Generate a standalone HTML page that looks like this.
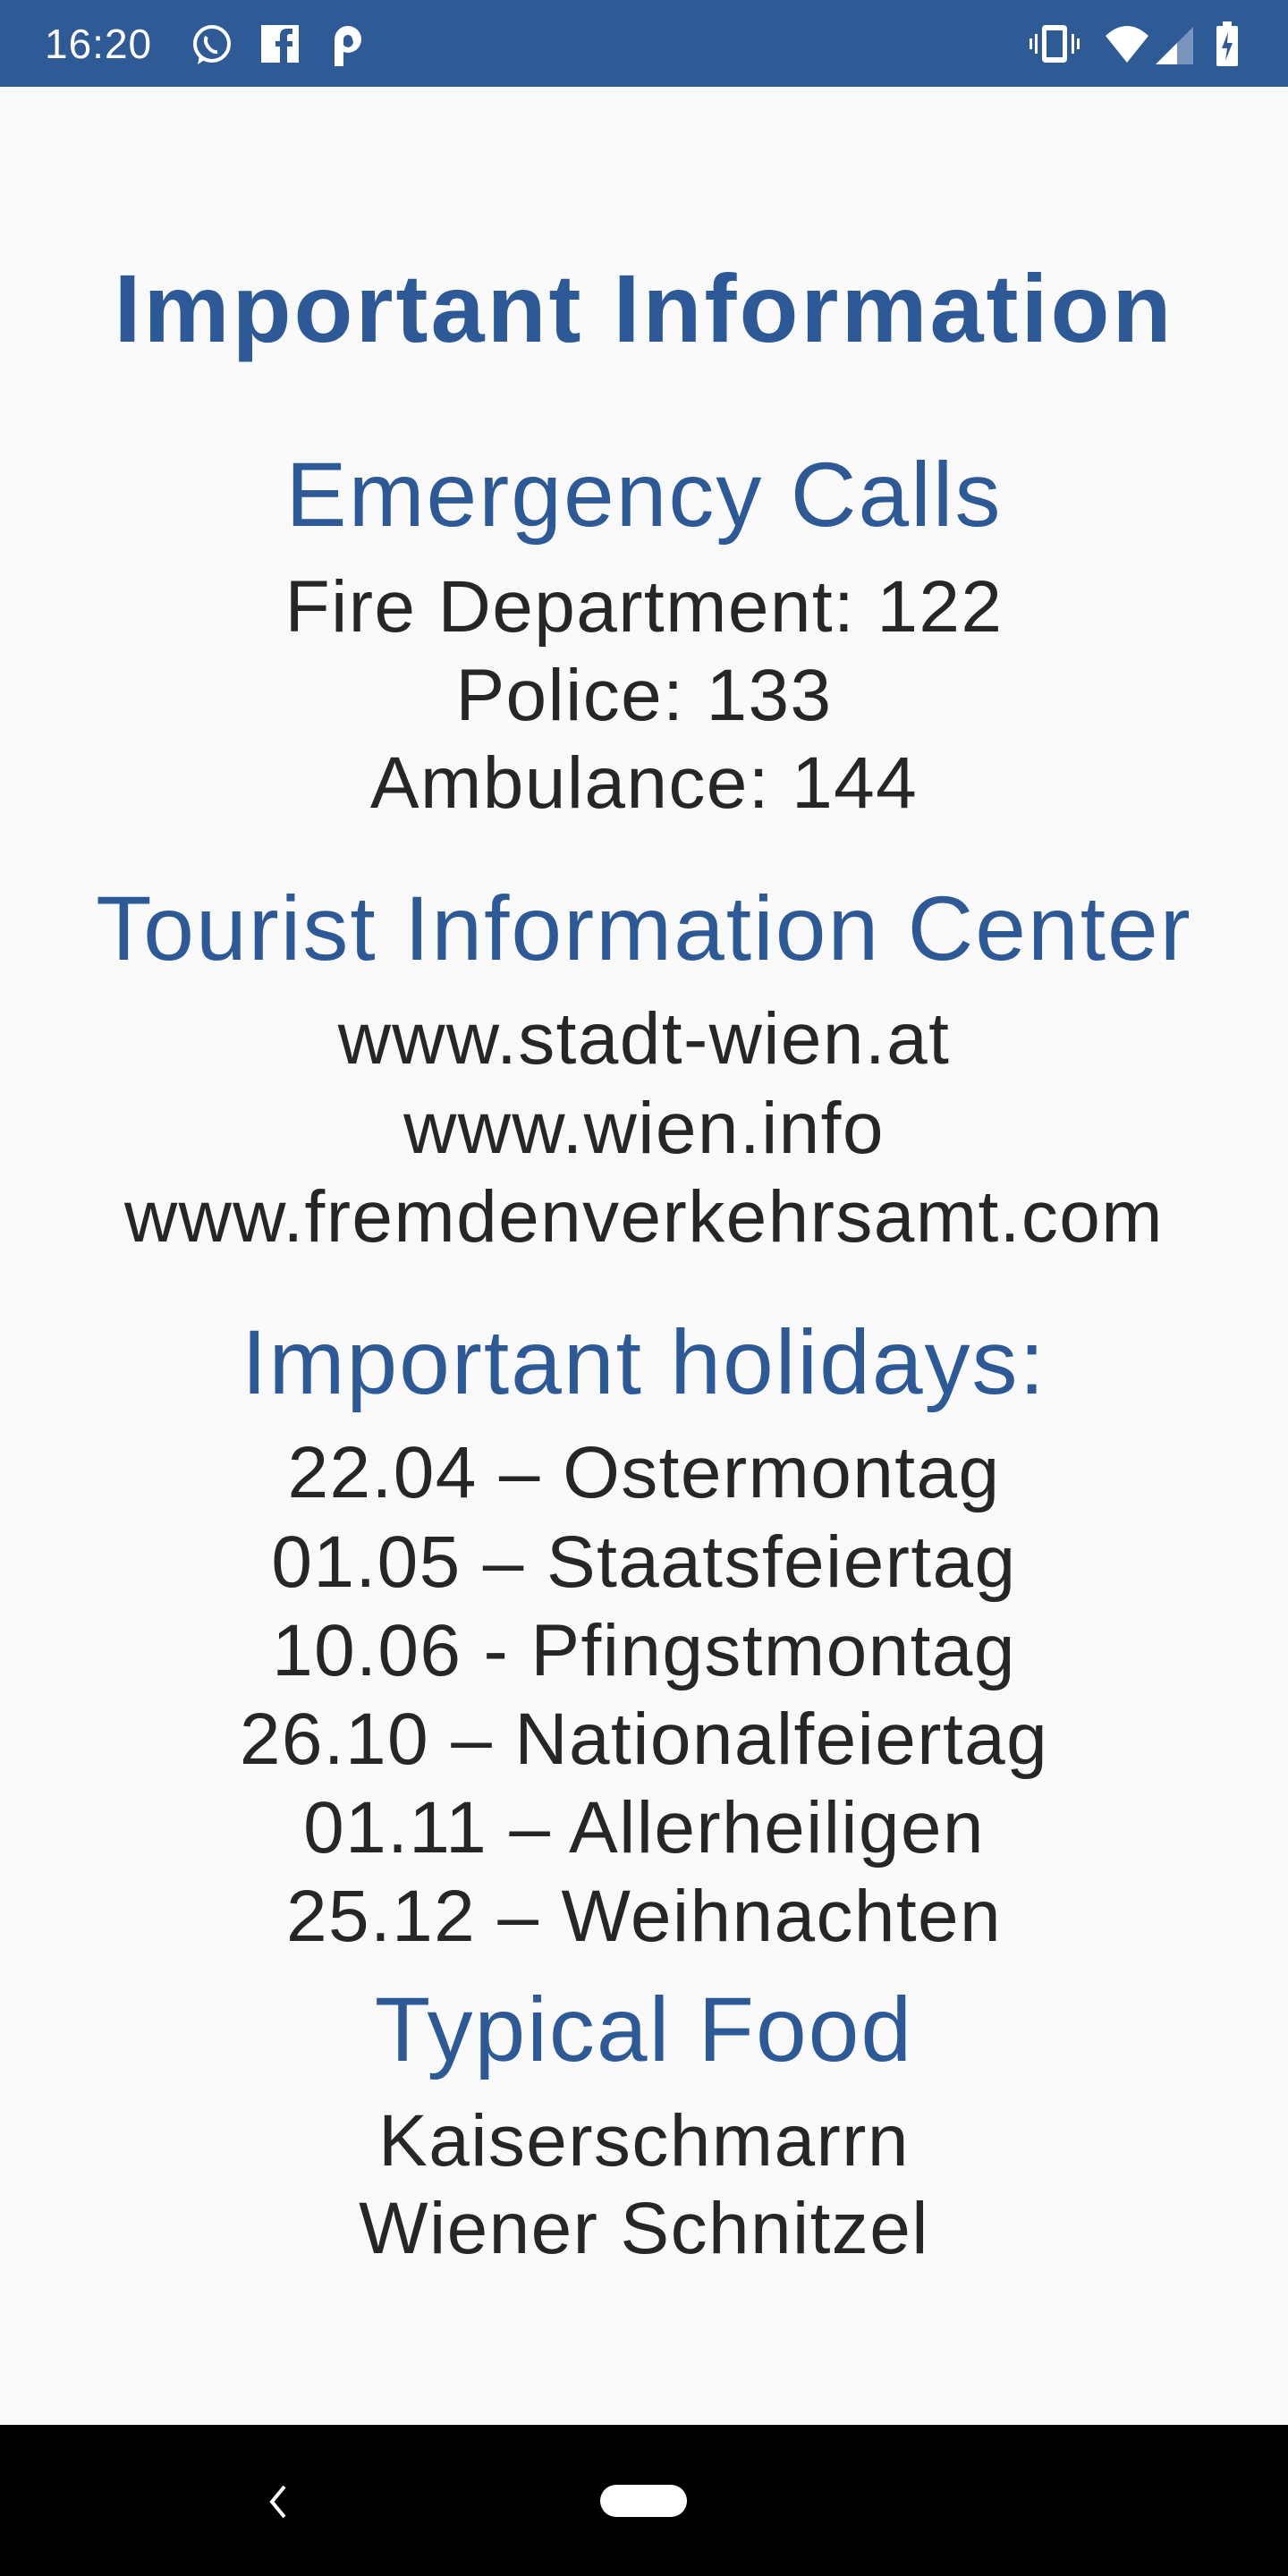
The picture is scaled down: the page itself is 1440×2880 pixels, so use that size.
<!DOCTYPE html>
<html><head><meta charset="utf-8"><style>
html,body{margin:0;padding:0;}
body{width:1440px;height:2880px;background:#fafafa;position:relative;overflow:hidden;font-family:"Liberation Sans",Arial,sans-serif;}
.sb{position:absolute;left:0;top:0;width:1440px;height:97px;background:#2e5a95;color:#fff;}
.clip{position:absolute;left:0;top:97px;width:1440px;height:2461px;overflow:hidden;}
.l{position:absolute;left:0;width:1440px;text-align:center;white-space:nowrap;}
.t{font-size:108px;line-height:108px;font-weight:bold;color:#2d5a96;letter-spacing:3px;}
.h{font-size:102px;line-height:102px;color:#2d5a96;letter-spacing:2px;}
.b{font-size:82px;line-height:82px;color:#262626;letter-spacing:1.4px;}
.nav{position:absolute;left:0;top:2711px;width:1440px;height:169px;background:#000;}
</style></head><body>
<div class="sb">
<div style="position:absolute;left:50px;top:24px;font-size:46px;line-height:50px;letter-spacing:1px;">16:20</div>
<svg style="position:absolute;left:212px;top:24px" width="50" height="52" viewBox="0 0 50 52"><circle cx="25" cy="25" r="19" fill="none" stroke="#fff" stroke-width="4"/><path d="M9 48 L11 38 L18 42 Z" fill="#fff"/><path d="M19 17 q-3 5 2 12 q5 6 10 5" fill="none" stroke="#fff" stroke-width="4"/></svg>
<svg style="position:absolute;left:292px;top:28px" width="42" height="42" viewBox="0 0 42 42"><rect width="42" height="42" fill="#fff"/><path d="M29 42 V24 h6 v-6 h-6 v-5 q0-3 3-3 h3 V4 h-6 q-8 0-8 8 v6 h-5 v6 h5 v18z" fill="#2e5a95"/></svg>
<svg style="position:absolute;left:372px;top:28px" width="34" height="46" viewBox="0 0 34 46"><path d="M2 46 V16 a15 15 0 0 1 30 0 a15 15 0 0 1 -20 14 V46z M12 16 v6 a5 5 0 0 0 10 -6 a5 5 0 0 0 -10 0z" fill="#fff" fill-rule="evenodd"/></svg>
<svg style="position:absolute;left:1150px;top:26px" width="60" height="46" viewBox="0 0 60 46"><rect x="15" y="2" width="28" height="42" rx="4" fill="#fff"/><rect x="20" y="8" width="18" height="30" fill="#2e5a95"/><rect x="7" y="12" width="3" height="22" fill="#fff"/><rect x="48" y="12" width="3" height="22" fill="#fff"/><rect x="1" y="17" width="3" height="12" fill="#fff"/><rect x="54" y="17" width="3" height="12" fill="#fff"/></svg>
<svg style="position:absolute;left:1234px;top:26px" width="52" height="46" viewBox="0 0 52 46"><path d="M2 14 Q26 -8 50 14 L26 44 Z" fill="#fff"/></svg>
<svg style="position:absolute;left:1290px;top:28px" width="46" height="46" viewBox="0 0 46 46"><path d="M2 44 L44 2 V44Z" fill="#7a95bd"/><path d="M2 44 L26 20 V44Z" fill="#fff"/></svg>
<svg style="position:absolute;left:1360px;top:24px" width="24" height="50" viewBox="0 0 24 50"><rect x="7" y="0" width="10" height="5" fill="#fff"/><rect x="0" y="5" width="24" height="45" rx="2" fill="#fff"/><path d="M13 12 L6 30 h6 l-2 14 l8 -20 h-6z" fill="#2e5a95"/></svg>
</div>
<div class="clip">
<div class="l t" style="top:194px">Important Information</div>
<div class="l h" style="top:405px">Emergency Calls</div>
<div class="l b" style="top:541px">Fire Department: 122</div>
<div class="l b" style="top:640px">Police: 133</div>
<div class="l b" style="top:738px">Ambulance: 144</div>
<div class="l h" style="top:890px">Tourist Information Center</div>
<div class="l b" style="top:1024px">www.stadt-wien.at</div>
<div class="l b" style="top:1124px">www.wien.info</div>
<div class="l b" style="top:1223px">www.fremdenverkehrsamt.com</div>
<div class="l h" style="top:1375px">Important holidays:</div>
<div class="l b" style="top:1509px">22.04 – Ostermontag</div>
<div class="l b" style="top:1609px">01.05 – Staatsfeiertag</div>
<div class="l b" style="top:1708px">10.06 - Pfingstmontag</div>
<div class="l b" style="top:1807px">26.10 – Nationalfeiertag</div>
<div class="l b" style="top:1906px">01.11 – Allerheiligen</div>
<div class="l b" style="top:2005px">25.12 – Weihnachten</div>
<div class="l h" style="top:2121px">Typical Food</div>
<div class="l b" style="top:2256px">Kaiserschmarrn</div>
<div class="l b" style="top:2354px">Wiener Schnitzel</div>
<div class="l b" style="top:2453px">Kaffee und Kuchen</div>
</div>
<div class="nav">
<svg style="position:absolute;left:298px;top:66px" width="26" height="40" viewBox="0 0 26 40"><path d="M20 3 L6 20 L20 37" fill="none" stroke="#fff" stroke-width="4"/></svg>
<div style="position:absolute;left:671px;top:67px;width:97px;height:36px;border-radius:18px;background:#fff;"></div>
</div>
</body></html>
